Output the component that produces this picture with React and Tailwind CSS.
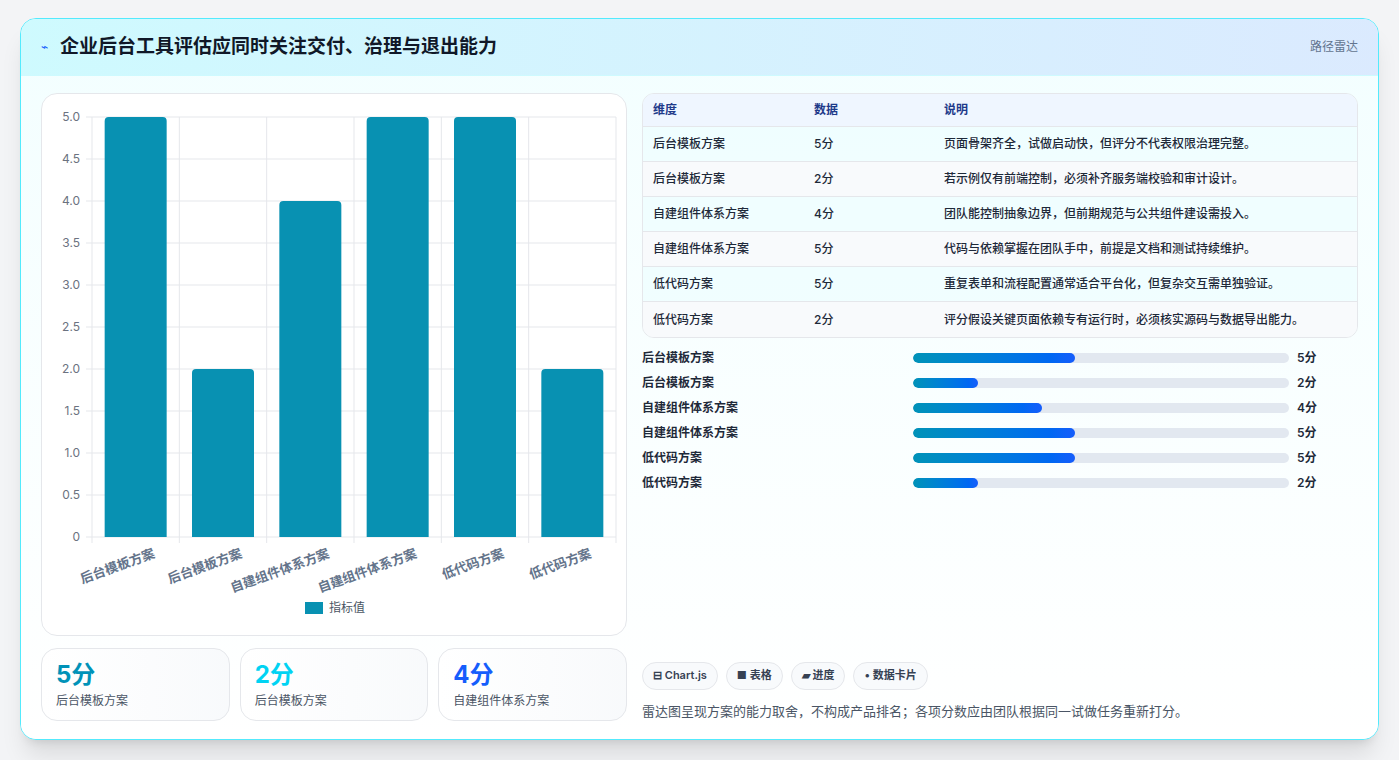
import React from "react";

const rows = [
  ["后台模板方案", 5, "页面骨架齐全，试做启动快，但评分不代表权限治理完整。"],
  ["后台模板方案", 2, "若示例仅有前端控制，必须补齐服务端校验和审计设计。"],
  ["自建组件体系方案", 4, "团队能控制抽象边界，但前期规范与公共组件建设需投入。"],
  ["自建组件体系方案", 5, "代码与依赖掌握在团队手中，前提是文档和测试持续维护。"],
  ["低代码方案", 5, "重复表单和流程配置通常适合平台化，但复杂交互需单独验证。"],
  ["低代码方案", 2, "评分假设关键页面依赖专有运行时，必须核实源码与数据导出能力。"],
];

function Chart() {
  const x0 = 50, x1 = 574, y0 = 23, y1 = 443;
  const step = (x1 - x0) / 6;
  const ticks = [0, 0.5, 1, 1.5, 2, 2.5, 3, 3.5, 4, 4.5, 5];
  return (
    <svg width="586" height="543" className="block">
      {ticks.map((t) => {
        const y = y1 - (t / 5) * (y1 - y0);
        return (
          <g key={t}>
            <line x1={x0 - 6} x2={x1} y1={y} y2={y} stroke="#e5e7eb" />
            <text x={x0 - 12} y={y + 4} textAnchor="end" fontSize="12" fill="#6b7280">{t.toFixed(1) === "0.0" ? "0" : t.toFixed(1)}</text>
          </g>
        );
      })}
      {Array.from({ length: 7 }).map((_, i) => (
        <line key={i} x1={x0 + i * step} x2={x0 + i * step} y1={y0} y2={y1 + 6} stroke="#e5e7eb" />
      ))}
      {rows.map((r, i) => {
        const cx = x0 + step * i + step / 2;
        const h = (r[1] / 5) * (y1 - y0);
        return (
          <g key={i}>
            <path d={`M${cx - 31} ${y1} V${y1 - h + 4} q0 -4 4 -4 h54 q4 0 4 4 V${y1} Z`} fill="#0891b2" />
            <text x={cx + 20} y={y1 + 20} textAnchor="end" fontSize="13" fontWeight="600" fill="#64748b" transform={`rotate(-20 ${cx + 20} ${y1 + 20})`}>{r[0]}</text>
          </g>
        );
      })}
      <rect x="263" y="508" width="18" height="12" fill="#0891b2" />
      <text x="287" y="518" fontSize="12" fill="#4b5563">指标值</text>
    </svg>
  );
}

export default function App() {
  return (
    <div className="min-h-screen bg-[#f3f4f6] px-5 pt-[18px]" style={{ fontFamily: "Inter, 'Noto Sans CJK SC', sans-serif" }}>
      <div className="bg-white rounded-2xl border border-cyan-300 shadow-xl overflow-hidden h-[722px] flex flex-col">
        <div className="h-[57px] flex items-center justify-between px-5 bg-gradient-to-r from-cyan-100 to-blue-100 border-b border-cyan-100">
          <div className="flex items-center gap-3">
            <span className="text-blue-600 text-xs">⌁</span>
            <h1 className="text-[19px] font-bold text-gray-900">企业后台工具评估应同时关注交付、治理与退出能力</h1>
          </div>
          <span className="text-xs text-slate-500">路径雷达</span>
        </div>
        <div className="flex-1 flex gap-[15px] px-5 pt-[17px] pb-[18px] bg-gradient-to-b from-cyan-50/60 to-white">
          <div className="w-[586px] flex flex-col gap-3">
            <div className="h-[543px] bg-white rounded-2xl border border-gray-200">
              <Chart />
            </div>
            <div className="flex gap-[10px]">
              {[["5分", "text-cyan-600", "后台模板方案"], ["2分", "text-cyan-400", "后台模板方案"], ["4分", "text-blue-600", "自建组件体系方案"]].map(([v, c, l], i) => (
                <div key={i} className="w-[189px] h-[73px] rounded-2xl border border-gray-200 bg-gradient-to-r from-white to-slate-50 px-[14px] pt-2">
                  <div className={`text-[24px] font-bold ${c}`}>{v}</div>
                  <div className="text-xs text-gray-600">{l}</div>
                </div>
              ))}
            </div>
          </div>
          <div className="flex-1 flex flex-col">
            <div className="rounded-xl border border-gray-200 overflow-hidden text-xs">
              <div className="flex h-[33px] items-center bg-blue-50 text-[#1e3a8a] font-semibold border-b border-gray-200">
                <div className="w-[171px] pl-[10px]">维度</div>
                <div className="w-[130px]">数据</div>
                <div>说明</div>
              </div>
              {rows.map((r, i) => (
                <div key={i} className={`flex h-[35px] items-center text-gray-800 font-medium border-b border-gray-200 last:border-b-0 ${i % 2 ? "bg-slate-50" : "bg-cyan-50/60"}`}>
                  <div className="w-[171px] pl-[10px]">{r[0]}</div>
                  <div className="w-[130px]">{r[1]}分</div>
                  <div>{r[2]}</div>
                </div>
              ))}
            </div>
            <div className="mt-[12px] flex flex-col gap-[9px]">
              {rows.map((r, i) => (
                <div key={i} className="flex items-center h-4 text-xs font-semibold text-gray-800">
                  <div className="w-[271px]">{r[0]}</div>
                  <div className="w-[376px] h-[10px] rounded-full bg-slate-200 overflow-hidden">
                    <div className="h-full rounded-full bg-gradient-to-r from-cyan-600 to-blue-600" style={{ width: `${(r[1] / 5) * 43}%` }} />
                  </div>
                  <div className="ml-2">{r[1]}分</div>
                </div>
              ))}
            </div>
            <div className="mt-auto flex gap-2 text-[11px] font-semibold text-gray-700">
              {["⊟ Chart.js", "■ 表格", "▰ 进度", "• 数据卡片"].map((t) => (
                <span key={t} className="px-[10px] h-[28px] flex items-center rounded-full border border-gray-200 bg-slate-50">{t}</span>
              ))}
            </div>
            <p className="mt-3 text-[13px] text-gray-600">雷达图呈现方案的能力取舍，不构成产品排名；各项分数应由团队根据同一试做任务重新打分。</p>
          </div>
        </div>
      </div>
    </div>
  );
}
